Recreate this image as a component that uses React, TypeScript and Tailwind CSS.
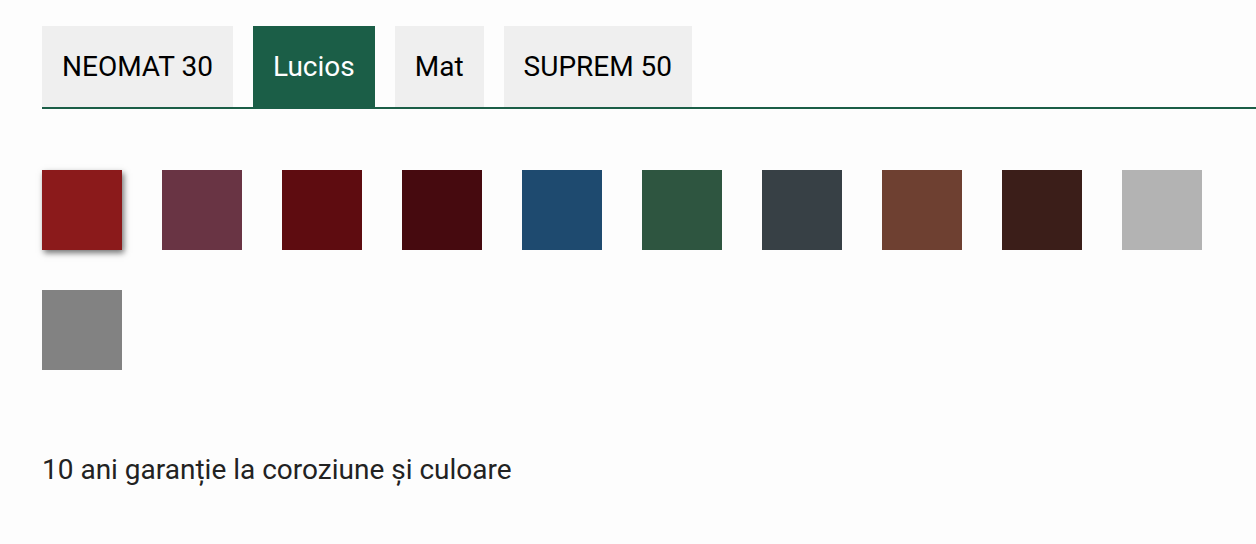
const tabs = ['NEOMAT 30', 'Lucios', 'Mat', 'SUPREM 50'];

const colors = [
  '#8b1a1b',
  '#693444',
  '#5e0c10',
  '#460a0f',
  '#1e4a6f',
  '#2e5540',
  '#374045',
  '#6e4031',
  '#3b1e19',
  '#b3b3b3',
  '#828282',
];

export default function App() {
  return (
    <div className="min-h-[544px] bg-[#fdfdfd] pl-[42px] pt-[26px] font-['Roboto',sans-serif] text-[#1a1a1a]">
      <div className="flex gap-5 border-b-2 border-[#1b5e47]">
        {tabs.map((t) => (
          <div
            key={t}
            className={
              t === 'Lucios'
                ? 'flex h-[81px] items-center bg-[#1b5e47] px-5 text-[28px] text-white'
                : 'flex h-[81px] items-center bg-[#efefef] px-5 text-[28px] text-black'
            }
          >
            {t}
          </div>
        ))}
      </div>

      <div className="mt-[61px] flex flex-wrap gap-10 pr-[40px]">
        {colors.map((c, i) => (
          <div
            key={c}
            className={i === 0 ? 'h-20 w-20 shadow-[2px_3px_6px_rgba(0,0,0,0.55)]' : 'h-20 w-20'}
            style={{ backgroundColor: c }}
          />
        ))}
      </div>

      <p className="mt-[80px] text-[28px] leading-[40px] text-[#222]">10 ani garanție la coroziune și culoare</p>
    </div>
  );
}
